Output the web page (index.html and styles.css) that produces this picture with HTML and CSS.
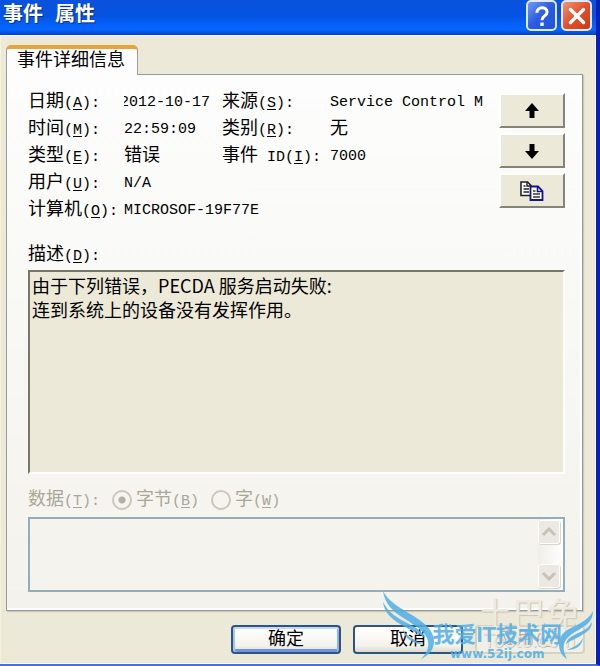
FILE: index.html
```
<!DOCTYPE html>
<html lang="zh-CN">
<head>
  <meta charset="UTF-8">
  <meta name="viewport" content="width=device-width, initial-scale=1.0">
  <title>事件 属性</title>
  <link rel="stylesheet" href="styles.css">
</head>
<body>
  <div class="window">
    <!-- Title bar -->
    <header class="title-bar">
      <h1>事件 属性</h1>
      <button class="caption-button help" type="button" aria-label="帮助">
        <svg viewBox="0 0 30 30" width="28" height="28"><path d="M9.500 11.500C9.500 4.500 20.500 4.500 20.500 10.800C20.500 15 15 14.500 15 19.500" fill="none" stroke="#fff" stroke-width="3.200"/><rect x="13.200" y="22" width="3.600" height="3.600" fill="#fff"/></svg>
      </button>
      <button class="caption-button close" type="button" aria-label="关闭">
        <svg viewBox="0 0 30 30" width="28" height="28"><path d="M8 8L22 22M22 8L8 22" stroke="#fff" stroke-width="3.600" stroke-linecap="round"/></svg>
      </button>
    </header>

    <main class="content">
      <div class="tabs" role="tablist">
        <button class="tab" type="button" role="tab" aria-selected="true">事件详细信息</button>
      </div>

      <section class="panel" role="tabpanel">
        <div class="summary">
          <!-- Event fields -->
          <dl class="fields">
            <dt>日期<span class="en">(<u>A</u>):</span></dt>
            <dd class="en date"><span>2012-10-17</span></dd>
            <dt>来源<span class="en">(<u>S</u>):</span></dt>
            <dd class="en">Service Control M</dd>

            <dt>时间<span class="en">(<u>M</u>):</span></dt>
            <dd class="en">22:59:09</dd>
            <dt>类别<span class="en">(<u>R</u>):</span></dt>
            <dd>无</dd>

            <dt>类型<span class="en">(<u>E</u>):</span></dt>
            <dd>错误</dd>
            <dt>事件<span class="en"> ID(<u>I</u>):</span></dt>
            <dd class="en">7000</dd>

            <dt>用户<span class="en">(<u>U</u>):</span></dt>
            <dd class="en wide">N/A</dd>

            <dt>计算机<span class="en">(<u>O</u>):</span></dt>
            <dd class="en wide">MICROSOF-19F77E</dd>
          </dl>

          <!-- Previous / next / copy -->
          <div class="tools">
            <button class="tool" type="button" aria-label="上一个">
              <svg viewBox="0 0 16 16" width="16" height="16"><path d="M8 0L15 8H10.500V15H5.500V8H1Z"/></svg>
            </button>
            <button class="tool" type="button" aria-label="下一个">
              <svg viewBox="0 0 16 16" width="16" height="16"><path d="M8 16L15 8H10.500V1H5.500V8H1Z"/></svg>
            </button>
            <button class="tool" type="button" aria-label="复制">
              <svg viewBox="0 0 24 20" width="24" height="20">
                <path d="M1 1H7.500L11 4.500V14.500H1Z" fill="#fff" stroke="#222" stroke-width="1.600"/>
                <path d="M7 1V5H11" fill="none" stroke="#222" stroke-width="1.400"/>
                <path d="M3.500 5H5.500M3.500 8H9M3.500 11H9" stroke="#222" stroke-width="1.400"/>
                <path d="M10.500 5.500H18L22.500 10V19H10.500Z" fill="#fff" stroke="#14148a" stroke-width="1.800"/>
                <path d="M17.500 5.500V10.500H22.500" fill="none" stroke="#14148a" stroke-width="1.600"/>
                <path d="M13 10H15.500M13 13H20M13 16H20" stroke="#333" stroke-width="1.400"/>
              </svg>
            </button>
          </div>
        </div>

        <label class="caption" for="description">描述<span class="en">(<u>D</u>):</span></label>
        <textarea class="description" id="description" readonly>由于下列错误，PECDA 服务启动失败:
连到系统上的设备没有发挥作用。</textarea>

        <div class="format">
          <label for="data">数据<span class="en">(<u>T</u>):</span></label>
          <label class="option"><input type="radio" name="format" checked disabled>字节<span class="en">(<u>B</u>)</span></label>
          <label class="option"><input type="radio" name="format" disabled>字<span class="en">(<u>W</u>)</span></label>
        </div>

        <div class="data-box">
          <textarea class="data" id="data" disabled></textarea>
          <div class="scrollbar">
            <button type="button" disabled aria-label="向上滚动">
              <svg viewBox="0 0 20 20" width="20" height="20"><path d="M4 13L10 7L16 13" fill="none" stroke="#c5c2b8" stroke-width="3"/></svg>
            </button>
            <button type="button" disabled aria-label="向下滚动">
              <svg viewBox="0 0 20 20" width="20" height="20"><path d="M4 7L10 13L16 7" fill="none" stroke="#c5c2b8" stroke-width="3"/></svg>
            </button>
          </div>
        </div>
      </section>

      <footer class="actions">
        <button class="action default" type="button">确定</button>
        <button class="action" type="button">取消</button>
        <button class="action" type="button" disabled>应用<span class="en">(<u>A</u>)</span></button>
      </footer>
    </main>

    <!-- Site marks over the lower right corner -->
    <div class="stamp">
      <span class="stamp-name">土巴兔</span>
      <span class="stamp-url">To8to.com</span>
    </div>
    <div class="mark">
      <svg class="wing" viewBox="0 0 54 70" width="54" height="70">
        <path d="M1 1C7 12 18 18 30 25C43 33 52 41 52 51C52 60 47 65 39 69C45 63 47 58 46 51C44 42 34 36 23 29C11 22 3 14 1 1Z"/>
        <path d="M1 12C6 22 15 28 25 33C35 38 41 42 43 48C36 42 27 40 18 34C8 28 2 21 1 12Z"/>
        <path d="M21 39C24 46 32 50 42 55C31 53 22 49 21 39Z"/>
      </svg>
      <div class="mark-text">
        <span class="mark-name">我爱IT技术网</span>
        <span class="mark-url">www.52ij.com</span>
      </div>
      <svg class="wing" viewBox="0 0 36 50" width="36" height="50">
        <path d="M35 1C31 9 23 13 15 17C6 21 1 26 1 34C1 41 4 46 9 49C6 43 5 39 6 34C8 27 15 23 22 19C31 14 35 9 35 1Z"/>
        <path d="M34 12C31 18 25 21 18 24C12 27 9 30 8 34C13 30 18 29 24 25C31 21 34 17 34 12Z"/>
        <path d="M25 28C22 34 16 37 9 40C18 40 24 36 25 28Z"/>
      </svg>
    </div>
  </div>
</body>
</html>
```
FILE: styles.css
```
* {
  margin: 0;
  padding: 0;
  box-sizing: border-box;
}
body {
  font-family: "Liberation Mono", "Noto Sans CJK SC", monospace;
  font-size: 18px;
  color: #000;
}
button,
textarea {
  font: inherit;
  color: inherit;
}
svg {
  display: block;
}
.en {
  font-size: 15px;
  white-space: pre;
}
.en u {
  text-underline-offset: 2px;
}

/* Window frame */
.window {
  position: relative;
  min-height: 100vh;
  display: flex;
  flex-direction: column;
  background: #ece9d8;
  border-right: 4px solid #0a22b4;
  border-bottom: 2px solid #4a70d8;
  overflow: hidden;
}
.title-bar {
  display: flex;
  align-items: center;
  gap: 4px;
  height: 35px;
  margin-right: -4px;
  padding: 0 8px 4px 3px;
  background: linear-gradient(#0a52dc 0, #0453e2 45%, #0560fa 70%, #0566ff 85%, #0340c0 100%);
}
.title-bar h1 {
  flex: 1;
  font-size: 20px;
  line-height: 28px;
  font-weight: bold;
  color: #fff;
  text-shadow: 1px 1px 1px #0b2a80;
}
.caption-button {
  width: 31px;
  height: 31px;
  border: 2px solid #dfe8fc;
  border-radius: 5px;
}
.help {
  background: linear-gradient(135deg, #6f9cf5, #2a5be0 50%, #1f55dc);
}
.close {
  background: linear-gradient(135deg, #f0957a, #e0512c 50%, #c93c12);
}

.content {
  flex: 1;
  display: flex;
  flex-direction: column;
  padding: 9px 12px 9px 6px;
  border: 1px solid #fbf9ef;
  border-left-color: #f7f2dc;
}

/* Tab */
.tabs {
  display: flex;
  margin-left: -1px;
}
.tab {
  position: relative;
  z-index: 1;
  height: 30px;
  margin-bottom: -1px;
  padding: 0 12px 2px 10px;
  line-height: 24px;
  background: #fdfdfd;
  border: 1px solid #9a9f9c;
  border-top: 4px solid #e8a33a;
  border-bottom: 0;
  border-radius: 5px 5px 0 0;
}
.panel {
  flex: 1;
  display: flex;
  flex-direction: column;
  margin-left: -1px;
  padding: 14px 17px 18px 21px;
  background: linear-gradient(#fdfdfd, #f3f2ec);
  border: 1px solid #979c98;
  box-shadow: inset -2px -2px #fff, 1px 1px 1px #c9c7ba;
}

/* Event fields */
.summary {
  display: flex;
  justify-content: space-between;
}
.fields {
  display: grid;
  grid-template-columns: 96px 98px 108px 1fr;
  grid-auto-rows: 27px;
  line-height: 27px;
  white-space: nowrap;
}
.date {
  display: flex;
  justify-content: flex-end;
  width: 86px;
  overflow: hidden;
}
.wide {
  grid-column: 2 / -1;
}
.tools {
  display: flex;
  flex-direction: column;
  gap: 5px;
  padding-top: 4px;
}
.tool {
  display: flex;
  justify-content: center;
  align-items: center;
  width: 66px;
  height: 35px;
  background: #ece9d8;
  border: 2px solid #fff;
  border-right-color: #858478;
  border-bottom-color: #858478;
}

.caption {
  margin-top: 18px;
  line-height: 27px;
}
.description {
  flex: 1;
  min-height: 120px;
  padding: 1px 2px;
  line-height: 24px;
  font-family: "Liberation Sans Narrow", "Noto Sans CJK SC", sans-serif;
  background: #ece9d8;
  border: 2px solid #fff;
  border-top-color: #77766c;
  border-left-color: #77766c;
  resize: none;
  outline: none;
}

/* Data */
.format {
  display: flex;
  align-items: flex-end;
  gap: 12px;
  height: 43px;
  padding-bottom: 2px;
  line-height: 27px;
  color: #aaa797;
}
.option input {
  appearance: none;
  width: 20px;
  height: 20px;
  margin-right: 4px;
  vertical-align: middle;
  border: 2px solid #cbc8ba;
  border-radius: 50%;
}
.option input:checked {
  background: radial-gradient(circle, #b3b0a3 0 3px, transparent 4px);
}
.data-box {
  display: flex;
  height: 75px;
  background: #f4f3ee;
  border: 2px solid #96acb9;
}
.data {
  flex: 1;
  background: transparent;
  border: 0;
  resize: none;
}
.scrollbar {
  display: flex;
  flex-direction: column;
  justify-content: space-between;
  padding: 1px 3px 2px 0;
  background: linear-gradient(90deg, #f0eee8, #fff);
}
.scrollbar button {
  width: 22px;
  height: 24px;
  background: #ebe9e1;
  border: 1px solid #fff;
  border-radius: 3px;
  box-shadow: 1px 1px #dad7cb;
}

/* Bottom buttons */
.actions {
  display: flex;
  justify-content: flex-end;
  gap: 12px;
  margin-right: -2px;
  padding-top: 14px;
}
.action {
  width: 110px;
  height: 29px;
  line-height: 24px;
  background: linear-gradient(#fff, #f4f3ec 75%, #dcd8cb);
  border: 2px solid #2d5580;
  border-radius: 4px;
}
.action.default {
  box-shadow: inset 0 2px #c4daf8, inset -2px 0 #8fb0ea, inset 2px 0 #a9c4f0, inset 0 -3px #6f93de;
}
.action:disabled {
  color: #b2ae9e;
  background: #f2f0e6;
  border-color: #d6d2c1;
}

/* Site marks */
.stamp {
  position: absolute;
  right: 16px;
  bottom: 14px;
  display: flex;
  flex-direction: column;
  align-items: center;
  font-family: "Noto Sans CJK SC", sans-serif;
  color: #edebe1;
  text-shadow: 1px 1px 1px #c8c4b6;
  pointer-events: none;
}
.stamp-name {
  font-size: 34px;
  line-height: 34px;
}
.stamp-url {
  font-family: "Liberation Sans", sans-serif;
  font-size: 20px;
  line-height: 20px;
}
.mark {
  position: absolute;
  right: 2px;
  bottom: 4px;
  display: flex;
  align-items: flex-end;
  color: #50aee8;
  opacity: 0.85;
  pointer-events: none;
}
.wing {
  fill: #50aee8;
}
.mark-text {
  display: flex;
  flex-direction: column;
  align-items: center;
  margin: 0 -4px -1px;
}
.mark-name {
  font-family: "Liberation Sans", "Noto Sans CJK SC", sans-serif;
  font-size: 22px;
  font-weight: bold;
  line-height: 24px;
}
.mark-url {
  font-family: "DejaVu Sans", sans-serif;
  font-size: 12px;
  font-weight: bold;
  line-height: 14px;
}
```
